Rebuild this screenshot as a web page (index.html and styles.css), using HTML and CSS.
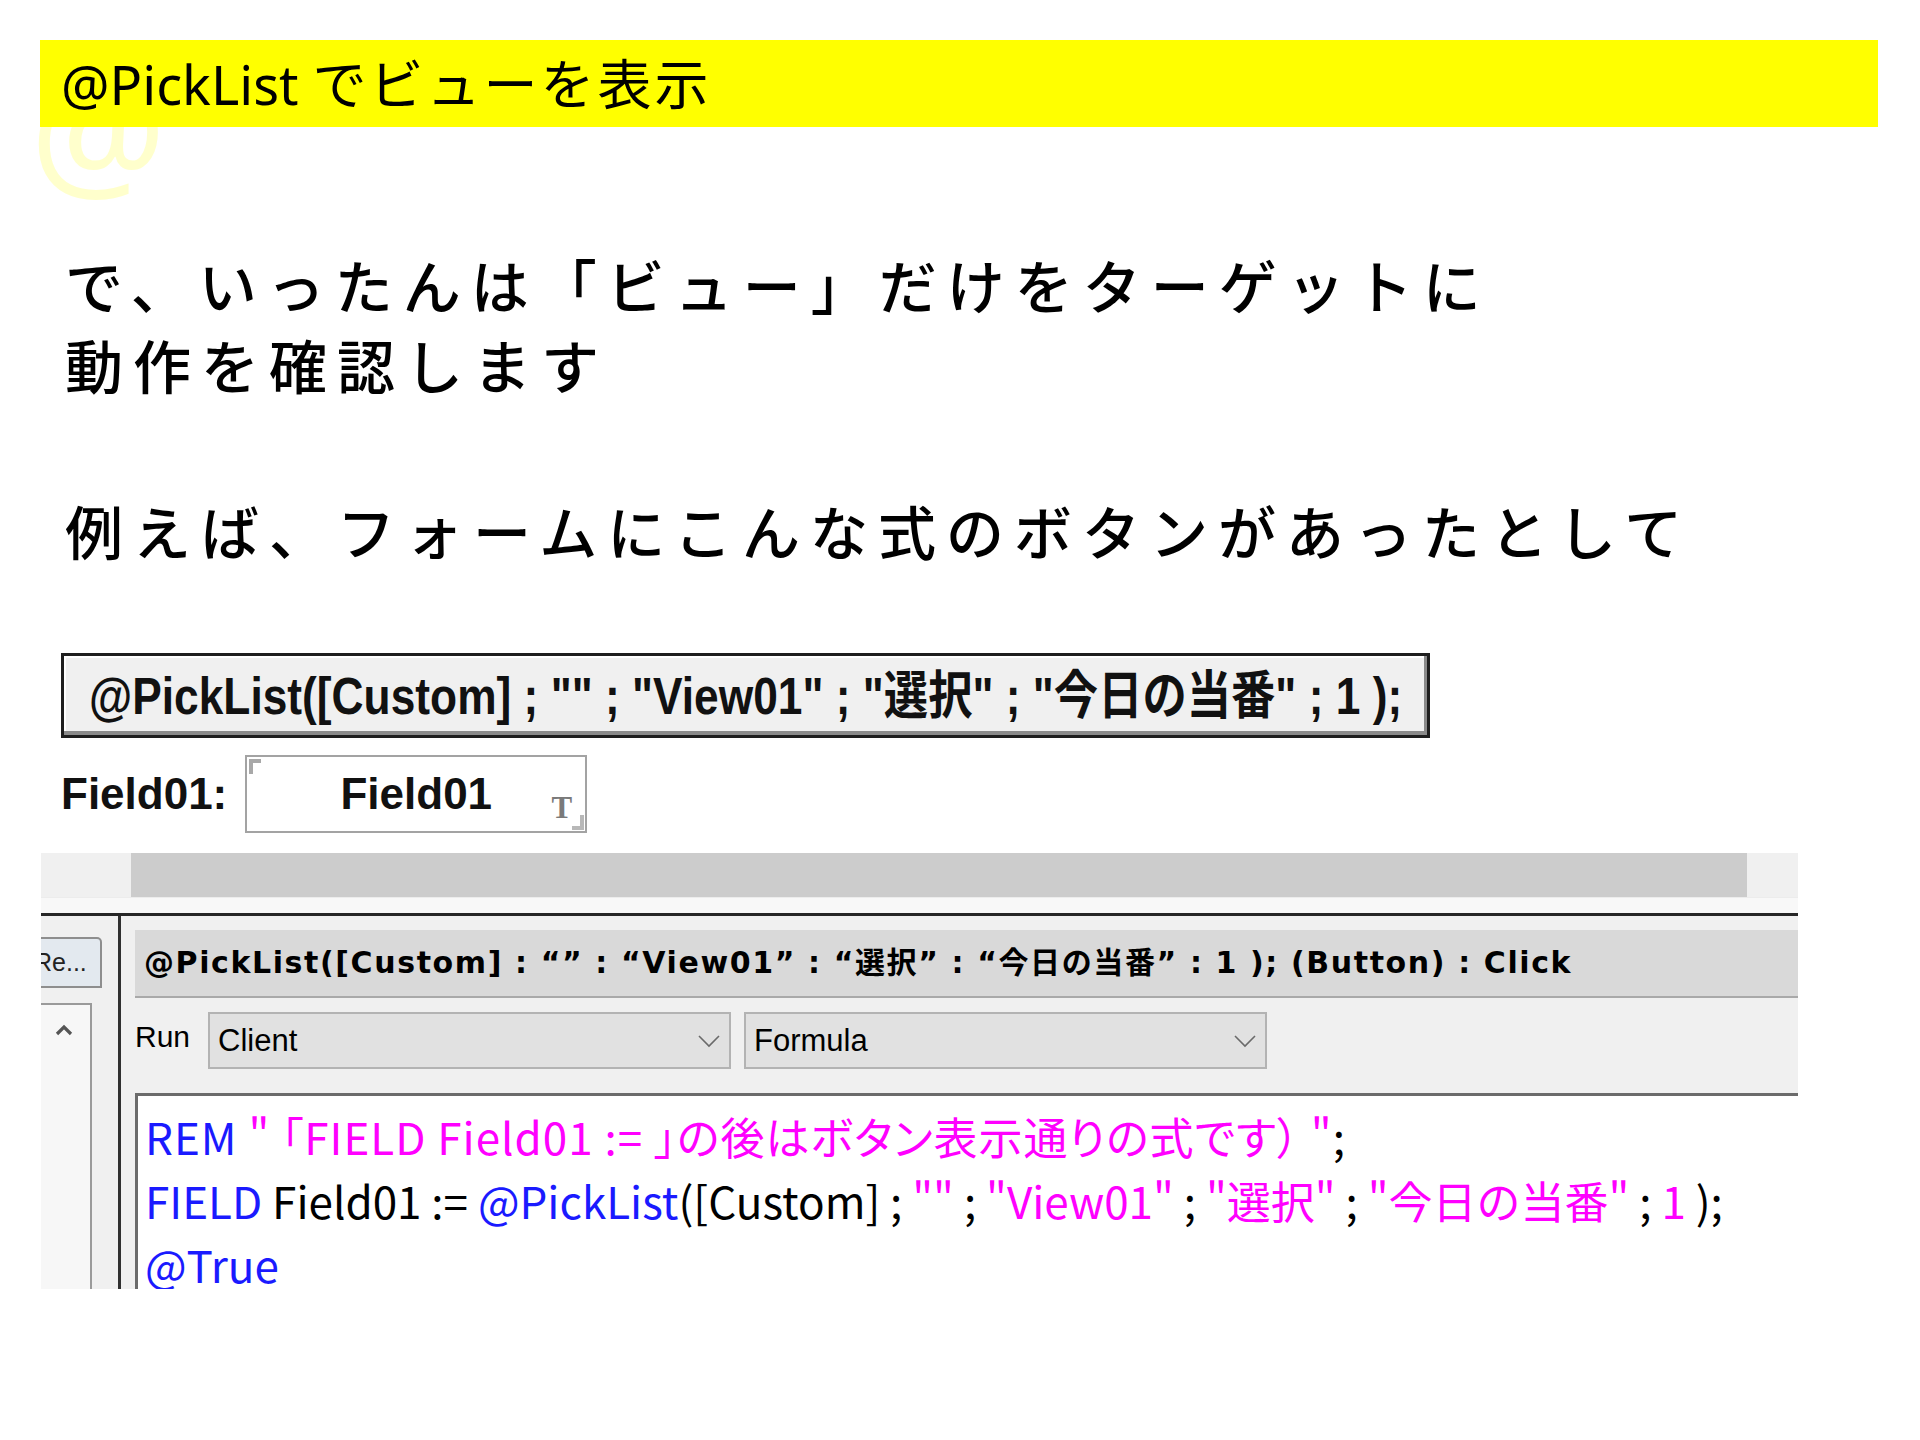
FILE: index.html
```html
<!DOCTYPE html>
<html lang="ja">
<head>
<meta charset="utf-8">
<title>@PickList でビューを表示</title>
<link rel="stylesheet" href="styles.css">
</head>
<body>
<div class="page">
  <div class="watermark">@</div>
  <div class="banner">@PickList <span class="banner-jp">でビューを表示</span></div>

  <p class="lead first">で、いったんは「ビュー」だけをターゲットに<br>動作を確認します</p>
  <p class="lead second">例えば、フォームにこんな式のボタンがあったとして</p>

  <div class="button-box"><span class="btn-text">@PickList([Custom] ; "" ; "View01" ; "選択" ; "今日の当番" ; 1 );</span></div>

  <div class="field-row">
    <span class="field-label">Field01:</span>
    <div class="field-box">
      <span class="corner-tl"></span>
      <span class="field-name">Field01</span>
      <span class="type-t">T</span>
      <span class="corner-br"></span>
    </div>
  </div>

  <div class="shot">
    <div class="shot-top">
      <div class="shot-bar"></div>
      <div class="shot-strip"></div>
    </div>
    <div class="shot-body">
      <div class="side">
        <div class="side-tab"><span>Re...</span></div>
        <div class="side-box">
          <svg class="chev-up" width="20" height="14" viewBox="0 0 20 14"><polyline points="3,11 10,4 17,11" fill="none" stroke="#555" stroke-width="3.2"/></svg>
        </div>
      </div>
      <div class="main">
        <div class="title-bar">@PickList([Custom] : “” : “View01” : “選択” : “今日の当番” : 1 ); (Button) : Click</div>
        <div class="run-row">
          <span class="run-label">Run</span>
          <div class="select client">
            <span>Client</span>
            <svg width="24" height="14" viewBox="0 0 24 14"><polyline points="2,2 12,12 22,2" fill="none" stroke="#6a6a6a" stroke-width="1.6"/></svg>
          </div>
          <div class="select formula">
            <span>Formula</span>
            <svg width="24" height="14" viewBox="0 0 24 14"><polyline points="2,2 12,12 22,2" fill="none" stroke="#6a6a6a" stroke-width="1.6"/></svg>
          </div>
        </div>
        <div class="editor">
          <div class="code-line tight"><span class="kw">REM</span> <span class="str">" 「FIELD Field01 := 」の後はボタン表示通りの式です） "</span>;</div>
          <div class="code-line"><span class="kw">FIELD</span> Field01 := <span class="kw">@PickList</span>([Custom] ; <span class="str">""</span> ; <span class="str">"View01"</span> ; <span class="str">"選択"</span> ; <span class="str">"今日の当番"</span> ; <span class="str">1</span> );</div>
          <div class="code-line"><span class="kw">@True</span></div>
        </div>
      </div>
    </div>
  </div>
</div>
</body>
</html>
```

FILE: styles.css
```css
html, body {
  margin: 0;
  padding: 0;
  background: #ffffff;
}

.page {
  position: relative;
  width: 1920px;
  height: 1440px;
  box-sizing: border-box;
  padding: 40px 0 0 40px;
  font-family: "Noto Sans CJK JP", "Noto Sans", sans-serif;
  color: #000;
}

.watermark {
  position: absolute;
  left: 30px;
  top: 52px;
  font-family: "Noto Sans", sans-serif;
  font-size: 152px;
  line-height: 1;
  color: #ffffcc;
  z-index: 0;
}

.banner {
  position: relative;
  z-index: 1;
  width: 1838px;
  height: 87px;
  box-sizing: border-box;
  padding: 2px 0 0 21px;
  background: #ffff00;
  font-family: "Noto Sans", "Noto Sans CJK JP", sans-serif;
  font-size: 54px;
  line-height: 85px;
  white-space: nowrap;
}

.banner-jp {
  letter-spacing: 3px;
}

.lead {
  margin: 0;
  padding-left: 25px;
  font-family: "Noto Sans CJK JP", sans-serif;
  font-weight: 500;
  font-size: 58px;
  line-height: 80px;
  letter-spacing: 10px;
  white-space: nowrap;
}

.lead.first {
  margin-top: 117px;
}

.lead.second {
  margin-top: 86px;
}

.button-box {
  margin: 83px 0 0 21px;
  width: 1369px;
  height: 85px;
  box-sizing: border-box;
  border: 3px solid #1e1e1e;
  background: #f0f0f0;
  box-shadow: inset -3px -4px 0 #8a8a8a, inset 2px 2px 0 #ffffff;
  display: flex;
  align-items: center;
  padding-left: 25px;
  overflow: hidden;
}

.btn-text {
  display: inline-block;
  font-family: "Liberation Sans", "Noto Sans CJK JP", sans-serif;
  font-weight: bold;
  font-size: 52px;
  line-height: 1;
  white-space: nowrap;
  transform: scaleX(0.852);
  transform-origin: left center;
  color: #111;
}

.field-row {
  margin: 17px 0 0 21px;
  height: 78px;
  display: flex;
  align-items: center;
}

.field-label {
  font-family: "Liberation Sans", sans-serif;
  font-weight: bold;
  font-size: 44px;
  color: #111;
}

.field-box {
  position: relative;
  margin-left: 18px;
  width: 342px;
  height: 78px;
  box-sizing: border-box;
  border: 2px solid #a3a3a3;
  display: flex;
  align-items: center;
  justify-content: center;
}

.field-name {
  font-family: "Liberation Sans", sans-serif;
  font-weight: bold;
  font-size: 44px;
  color: #111;
}

.corner-tl {
  position: absolute;
  left: 2px;
  top: 2px;
  width: 12px;
  height: 15px;
  box-sizing: border-box;
  border-top: 4px solid #a8a8a8;
  border-left: 4px solid #a8a8a8;
}

.corner-br {
  position: absolute;
  right: 1px;
  bottom: 1px;
  width: 12px;
  height: 15px;
  box-sizing: border-box;
  border-bottom: 4px solid #b8b8b8;
  border-right: 4px solid #b8b8b8;
}

.type-t {
  position: absolute;
  right: 13px;
  bottom: 8px;
  font-family: "Liberation Serif", serif;
  font-weight: bold;
  font-size: 31px;
  line-height: 1;
  color: #7a7a7a;
}

.shot {
  margin: 20px 0 0 1px;
  width: 1757px;
  height: 436px;
  display: flex;
  flex-direction: column;
  background: #f0f0f0;
}

.shot-top {
  height: 60px;
  padding-left: 90px;
  display: flex;
  flex-direction: column;
}

.shot-bar {
  width: 1616px;
  height: 44px;
  background: #cccccc;
}

.shot-strip {
  flex: 1;
  margin-left: -90px;
  background: #f8f8f8;
  border-top: 1px solid #ececec;
}

.shot-body {
  flex: 1;
  display: flex;
  border-top: 3px solid #262626;
  min-height: 0;
}

.side {
  width: 77px;
  border-right: 3px solid #303030;
  display: flex;
  flex-direction: column;
}

.side-tab {
  margin-top: 21px;
  width: 61px;
  height: 51px;
  box-sizing: border-box;
  background: #e3e9ef;
  border: 2px solid #8e8e8e;
  border-left: none;
  border-top-right-radius: 5px;
  overflow: hidden;
  display: flex;
  align-items: center;
}

.side-tab span {
  margin-left: -7px;
  font-family: "Liberation Sans", sans-serif;
  font-size: 25px;
  color: #222;
  white-space: nowrap;
}

.side-box {
  margin-top: 15px;
  width: 51px;
  flex: 1;
  box-sizing: border-box;
  background: #f7f7f7;
  border-top: 2px solid #9a9a9a;
  border-right: 2px solid #9a9a9a;
  padding: 18px 0 0 13px;
}

.chev-up {
  display: block;
}

.main {
  flex: 1;
  padding-left: 14px;
  display: flex;
  flex-direction: column;
  min-width: 0;
}

.title-bar {
  margin-top: 14px;
  height: 68px;
  box-sizing: border-box;
  background: #d9d9d9;
  border-bottom: 2px solid #a9a9a9;
  padding-left: 9px;
  font-family: "DejaVu Sans", "Noto Sans CJK JP", sans-serif;
  font-weight: bold;
  font-size: 30px;
  letter-spacing: 1.6px;
  line-height: 66px;
  white-space: nowrap;
  overflow: hidden;
  color: #000;
}

.run-row {
  margin-top: 14px;
  height: 57px;
  display: flex;
  align-items: center;
}

.run-label {
  font-family: "Liberation Sans", sans-serif;
  font-size: 30px;
  margin-bottom: 8px;
  color: #000;
}

.select {
  width: 523px;
  height: 57px;
  box-sizing: border-box;
  background: #e1e1e1;
  border: 2px solid #b3b3b3;
  display: flex;
  align-items: center;
  justify-content: space-between;
  padding: 0 8px 0 8px;
  font-family: "Liberation Sans", sans-serif;
  font-size: 31px;
  color: #000;
}

.select.client {
  margin-left: 18px;
}

.select.formula {
  margin-left: 13px;
}

.select svg {
  display: block;
}

.editor {
  margin-top: 24px;
  flex: 1;
  background: #ffffff;
  border-top: 3px solid #6b6b6b;
  border-left: 3px solid #6b6b6b;
  padding: 8px 0 0 7px;
  overflow: hidden;
  min-height: 0;
}

.code-line {
  font-family: "Noto Sans CJK JP", sans-serif;
  font-size: 44px;
  line-height: 64px;
  white-space: nowrap;
  color: #000;
}

.code-line.tight {
  font-feature-settings: "palt";
  letter-spacing: 1px;
}

.kw {
  color: #1a1aff;
}

.str {
  color: #ff00ff;
}
```
